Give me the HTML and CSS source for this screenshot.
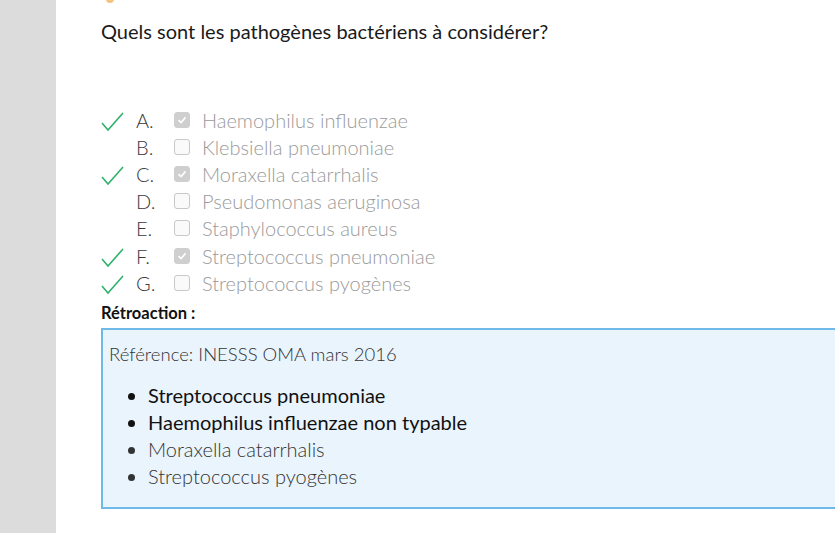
FILE: index.html
```html
<!DOCTYPE html>
<html lang="fr">
<head>
<meta charset="utf-8">
<link rel="stylesheet" href="styles.css">
</head>
<body>
<div class="page">
  <aside class="sidebar"></aside>
  <main class="content">
    <span class="dot"></span>
    <h1 class="question">Quels sont les pathogènes bactériens à considérer?</h1>
    <ul class="options">
      <li class="opt"><span class="mark"><svg viewBox="0 0 24 24" width="24" height="24"><path d="M1 13 L7 20 L22 3" fill="none" stroke="#2fb26a" stroke-width="1.6"/></svg></span><span class="letter">A.</span><span class="box checked"><svg viewBox="0 0 16 16" width="16" height="16"><path d="M4 8.2 L7 11 L12 5" fill="none" stroke="#fff" stroke-width="1.8"/></svg></span><span class="label">Haemophilus influenzae</span></li>
      <li class="opt"><span class="mark"></span><span class="letter">B.</span><span class="box"></span><span class="label">Klebsiella pneumoniae</span></li>
      <li class="opt"><span class="mark"><svg viewBox="0 0 24 24" width="24" height="24"><path d="M1 13 L7 20 L22 3" fill="none" stroke="#2fb26a" stroke-width="1.6"/></svg></span><span class="letter">C.</span><span class="box checked"><svg viewBox="0 0 16 16" width="16" height="16"><path d="M4 8.2 L7 11 L12 5" fill="none" stroke="#fff" stroke-width="1.8"/></svg></span><span class="label">Moraxella catarrhalis</span></li>
      <li class="opt"><span class="mark"></span><span class="letter">D.</span><span class="box"></span><span class="label">Pseudomonas aeruginosa</span></li>
      <li class="opt"><span class="mark"></span><span class="letter">E.</span><span class="box"></span><span class="label">Staphylococcus aureus</span></li>
      <li class="opt"><span class="mark"><svg viewBox="0 0 24 24" width="24" height="24"><path d="M1 13 L7 20 L22 3" fill="none" stroke="#2fb26a" stroke-width="1.6"/></svg></span><span class="letter">F.</span><span class="box checked"><svg viewBox="0 0 16 16" width="16" height="16"><path d="M4 8.2 L7 11 L12 5" fill="none" stroke="#fff" stroke-width="1.8"/></svg></span><span class="label">Streptococcus pneumoniae</span></li>
      <li class="opt"><span class="mark"><svg viewBox="0 0 24 24" width="24" height="24"><path d="M1 13 L7 20 L22 3" fill="none" stroke="#2fb26a" stroke-width="1.6"/></svg></span><span class="letter">G.</span><span class="box"></span><span class="label">Streptococcus pyogènes</span></li>
    </ul>
    <div class="fb-title">Rétroaction :</div>
    <div class="feedback">
      <p class="ref">Référence: INESSS OMA mars 2016</p>
      <ul class="fb-list">
        <li class="strong">Streptococcus pneumoniae</li>
        <li class="strong">Haemophilus influenzae non typable</li>
        <li>Moraxella catarrhalis</li>
        <li>Streptococcus pyogènes</li>
      </ul>
    </div>
  </main>
</div>
</body>
</html>
```
FILE: styles.css
```css
html, body {
  margin: 0;
  padding: 0;
  background: #fff;
  overflow: hidden;
}
body {
  font-family: "Lato", "Liberation Sans", sans-serif;
  color: #222;
}
.page {
  display: flex;
  width: 835px;
  height: 533px;
}
.sidebar {
  width: 56px;
  flex: none;
  background: #dcdcdc;
}
.content {
  flex: 1;
  padding-left: 45px;
  position: relative;
  min-width: 0;
}
.dot {
  position: absolute;
  left: 50px;
  top: -5px;
  width: 8px;
  height: 8px;
  border-radius: 50%;
  background: #f0a64a;
  opacity: 0.7;
}
.question {
  margin: 18px 0 0;
  font-size: 20px;
  font-weight: 400;
  line-height: 26px;
  color: #1a1a1a;
}
.options {
  list-style: none;
  margin: 62px 0 0;
  padding: 0;
}
.opt {
  display: flex;
  align-items: center;
  height: 27.2px;
  font-size: 20px;
  font-weight: 300;
}
.mark {
  width: 35px;
  flex: none;
  display: flex;
  align-items: center;
  padding-top: 4px;
  height: 24px;
}
.letter {
  width: 38px;
  flex: none;
  color: #3a3a3a;
}
.box {
  width: 14px;
  height: 14px;
  border: 1px solid #c8c8c8;
  border-radius: 3px;
  background: #fafafa;
  flex: none;
  margin-right: 12px;
  display: flex;
  align-items: center;
  justify-content: center;
}
.box.checked {
  background: #cfcfcf;
  border-color: #cfcfcf;
}
.box svg {
  display: block;
}
.label {
  color: #9a9a9a;
}
.fb-title {
  margin-top: 7px;
  font-size: 16.5px;
  font-weight: 700;
  color: #111;
  line-height: 20px;
}
.feedback {
  margin-top: 5px;
  margin-right: -10px;
  height: 153px;
  border: 2px solid #6fb9e8;
  background: #eaf4fd;
  padding: 12px 6px;
  box-sizing: content-box;
}
.ref {
  margin: 0;
  font-size: 18.5px;
  font-weight: 300;
  color: #333;
  line-height: 24px;
}
.fb-list {
  margin: 16px 0 0;
  padding-left: 39px;
  font-size: 20px;
  font-weight: 300;
  color: #333;
}
.fb-list li {
  line-height: 27px;
}
.fb-list li.strong {
  font-weight: 400;
  color: #111;
}
```
